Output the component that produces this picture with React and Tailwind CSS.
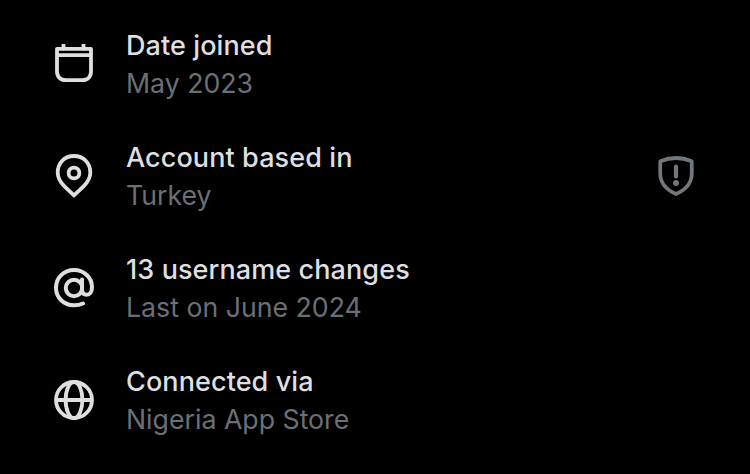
import React from "react";

const CalendarIcon = () => (
  <svg width="40" height="40" viewBox="0 0 40 40" fill="none" stroke="#dedfe0" strokeWidth="3.8" strokeLinejoin="round">
    <path d="M3 4.800h34v22.500c0 5.500-3.400 8.900-8.900 8.900H11.900c-5.500 0-8.900-3.400-8.900-8.900V4.800z" />
    <path d="M3 11.200h34" />
    <path d="M9.500 .6v4M29.500 .6v4" strokeLinecap="round" />
  </svg>
);

const PinIcon = () => (
  <svg width="40" height="44" viewBox="0 0 40 44" fill="none" stroke="#dedfe0" strokeWidth="3.800" strokeLinejoin="round">
    <path d="M20 2C10.300 2 3.700 9.300 3.700 18.500c0 5.500 2.900 10 6.800 13.900 3 3 6 5.600 9.500 9 3.500-3.400 6.500-6 9.500-9 3.900-3.900 6.800-8.400 6.800-13.900C36.300 9.300 29.700 2 20 2z" />
    <circle cx="20" cy="19" r="5.400" />
  </svg>
);

const AtIcon = () => (
  <svg width="40" height="40" viewBox="0 0 40 40" fill="none" stroke="#dedfe0" strokeWidth="4" strokeLinecap="round" strokeLinejoin="round">
    <path d="M29 35.500c-2.700 1.200-5.700 1.800-9 1.800C9.800 37.300 2 29.700 2 19.700 2 9.700 9.800 2 20 2s18 7.700 18 17.200c0 4.700-2.400 7.500-5.400 7.500-2.900 0-4.600-1.900-4.600-4.900V11.500" />
    <circle cx="20" cy="20" r="8.200" />
  </svg>
);

const GlobeIcon = () => (
  <svg width="40" height="40" viewBox="0 0 40 40" fill="none" stroke="#dedfe0" strokeWidth="3.800">
    <circle cx="20" cy="20" r="18" />
    <ellipse cx="20" cy="20" rx="8.400" ry="18" />
    <path d="M2 20h36" />
  </svg>
);

const ShieldIcon = () => (
  <svg width="36" height="40" viewBox="0 0 36 40" fill="none">
    <path d="M18 2c5.500 0 10.500 1.200 15.700 3.300.1 5 .2 9.700 0 13.700-.5 8.800-6.500 15-15.700 19-9.200-4-15.200-10.200-15.700-19-.2-4-.1-8.700 0-13.700C7.500 3.200 12.500 2 18 2z" stroke="#71767b" strokeWidth="3.800" strokeLinejoin="round" />
    <path d="M18 10.500v10" stroke="#71767b" strokeWidth="4.200" strokeLinecap="round" />
    <circle cx="18" cy="27" r="3" fill="#71767b" />
  </svg>
);

const rows = [
  { icon: <CalendarIcon />, title: "Date joined", sub: "May 2023" },
  { icon: <PinIcon />, title: "Account based in", sub: "Turkey", badge: true },
  { icon: <AtIcon />, title: "13 username changes", sub: "Last on June 2024" },
  { icon: <GlobeIcon />, title: "Connected via", sub: "Nigeria App Store" },
];

export default function App() {
  return (
    <div className="w-[750px] h-[474px] overflow-hidden bg-black pt-2 font-['Inter',sans-serif]">
      {rows.map((row) => (
        <div key={row.title} className="h-[112px] flex items-center pl-[54px] pr-[56px]">
          <div className="w-10 flex justify-center shrink-0">{row.icon}</div>
          <div className="ml-[32px] flex-1 pt-px">
            <div className="text-[27px] leading-[38px] font-medium tracking-[0.1px] text-[#dedfe0]">{row.title}</div>
            <div className="-mt-px text-[26.7px] leading-[38px] text-[#6b7075]">{row.sub}</div>
          </div>
          {row.badge && <ShieldIcon />}
        </div>
      ))}
    </div>
  );
}
